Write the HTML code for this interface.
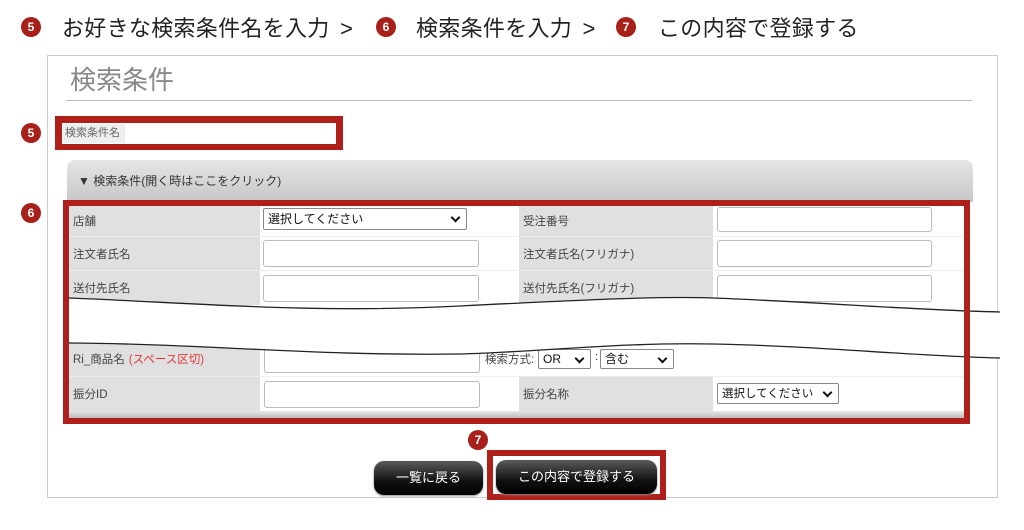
<!DOCTYPE html>
<html><head><meta charset="utf-8"><style>
*{margin:0;padding:0;box-sizing:border-box}
body{width:1024px;height:530px;background:#fff;font-family:"Liberation Sans","Noto Sans CJK JP",sans-serif;position:relative;overflow:hidden;color:#333}
.a{position:absolute}
.badge{position:absolute;width:20px;height:20px;border-radius:50%;background:#a8201a;color:#fff;font-size:12px;font-weight:bold;text-align:center;line-height:20px}
.hd{position:absolute;top:11px;font-size:22px;color:#222;white-space:nowrap;letter-spacing:0.3px}
.lab{position:absolute;background:#e0e0e0;font-size:11.5px;color:#444;padding-left:4px;display:flex;align-items:center}
.inp{position:absolute;background:#fff;border:1px solid #bbb;border-radius:3px}
.sel{position:absolute;background:#fff;border:1px solid #888;border-radius:2px;font-size:12px;color:#111;padding-left:4px;line-height:20px}
.sel:after{content:"";position:absolute;right:7px;top:5px;width:5px;height:5px;border-right:2px solid #111;border-bottom:2px solid #111;transform:rotate(45deg)}
.btn{position:absolute;border-radius:10px;background:linear-gradient(#5a5a5a,#111 60%,#000);color:#fff;font-size:13px;text-align:center;box-shadow:0 1px 2px #888}
</style></head><body>
<div class="badge" style="left:21px;top:17px">5</div>
<div class="hd" style="left:62px">お好きな検索条件名を入力 <span style="margin-left:4px">&gt;</span></div>
<div class="badge" style="left:376px;top:17px">6</div>
<div class="hd" style="left:416px">検索条件を入力 <span style="margin-left:4px">&gt;</span></div>
<div class="badge" style="left:616px;top:17px">7</div>
<div class="hd" style="left:658px">この内容で登録する</div>

<div class="a" style="left:47px;top:55px;width:951px;height:443px;border:1px solid #ccc"></div>
<div class="a" style="left:70px;top:60px;font-size:26px;color:#888">検索条件</div>
<div class="a" style="left:66px;top:100px;width:906px;height:1px;background:#bbb"></div>

<div class="badge" style="left:21px;top:123px">5</div>
<div class="a" style="left:55px;top:116px;width:288px;height:34px;background:#b0201a"></div>
<div class="a" style="left:62px;top:123px;width:274px;height:21px;background:#fff"></div>
<div class="a" style="left:63px;top:124px;width:62px;height:19px;background:#eee;font-size:11px;color:#666;line-height:19px;padding-left:2px">検索条件名</div>

<div class="a" style="left:67px;top:160px;width:906px;height:42px;border-radius:8px 8px 0 0;background:linear-gradient(#e6e6e6,#c6c6c6);font-size:12px;color:#333;padding:12px 0 0 11px">▼ 検索条件(開く時はここをクリック)</div>

<div class="badge" style="left:21px;top:203px">6</div>
<div class="a" style="left:63px;top:200px;width:907px;height:224px;background:#b0201a"></div>
<div class="a" style="left:69px;top:206px;width:895px;height:212px;background:#fff"></div>

<div class="lab" style="left:69px;top:206px;width:191px;height:30px">店舗</div>
<div class="sel" style="left:263px;top:208px;width:204px;height:22px">選択してください</div>
<div class="lab" style="left:519px;top:206px;width:194px;height:30px">受注番号</div>
<div class="inp" style="left:717px;top:207px;width:215px;height:25px"></div>

<div class="a" style="left:69px;top:236px;width:895px;height:1px;background:#eee"></div>
<div class="lab" style="left:69px;top:237px;width:191px;height:33px">注文者氏名</div>
<div class="inp" style="left:263px;top:240px;width:216px;height:27px"></div>
<div class="lab" style="left:519px;top:237px;width:194px;height:33px">注文者氏名(フリガナ)</div>
<div class="inp" style="left:717px;top:240px;width:215px;height:27px"></div>

<div class="a" style="left:69px;top:270px;width:895px;height:1px;background:#eee"></div>
<div class="lab" style="left:69px;top:271px;width:191px;height:34px;align-items:flex-start;padding-top:9px">送付先氏名</div>
<div class="inp" style="left:263px;top:275px;width:216px;height:27px"></div>
<div class="lab" style="left:519px;top:271px;width:194px;height:40px;align-items:flex-start;padding-top:9px">送付先氏名(フリガナ)</div>
<div class="inp" style="left:717px;top:275px;width:215px;height:27px"></div>

<div class="lab" style="left:69px;top:340px;width:191px;height:36px;align-items:flex-end;padding-bottom:9px">Ri_商品名 <span style="color:#e03a3a;margin-left:4px">(スペース区切)</span></div>
<div class="inp" style="left:264px;top:346px;width:216px;height:27px"></div>
<div class="a" style="left:485px;top:351px;font-size:11.5px;color:#444">検索方式:</div>
<div class="sel" style="left:538px;top:349px;width:53px;height:20px;line-height:18px">OR</div>
<div class="a" style="left:595px;top:351px;font-size:11px">:</div>
<div class="sel" style="left:600px;top:349px;width:74px;height:20px;line-height:18px">含む</div>

<div class="a" style="left:69px;top:376px;width:895px;height:1px;background:#eee"></div>
<div class="lab" style="left:69px;top:377px;width:191px;height:34px">振分ID</div>
<div class="inp" style="left:264px;top:381px;width:216px;height:27px"></div>
<div class="lab" style="left:519px;top:377px;width:194px;height:34px">振分名称</div>
<div class="sel" style="left:717px;top:383px;width:122px;height:21px;font-size:11.5px">選択してください</div>
<div class="a" style="left:69px;top:411px;width:895px;height:7px;background:linear-gradient(#e8e8e8,#bbb)"></div>

<svg class="a" style="left:60px;top:290px" width="940" height="80" viewBox="0 0 940 80">
<path d="M9 8 C120 12 250 24 400 16 C520 10 600 6 653 8 C760 12 850 20 940 22 L940 68 C850 66 760 56 653 54 C560 52 480 62 400 64 C250 66 150 54 9 53 Z" fill="#fff"/>
<path d="M9 8 C120 12 250 24 400 16 C520 10 600 6 653 8 C760 12 850 20 940 22" fill="none" stroke="#222" stroke-width="1.3"/>
<path d="M9 53 C150 54 250 66 400 64 C480 62 560 52 653 54 C760 56 850 66 940 68" fill="none" stroke="#222" stroke-width="1.3"/>
</svg>
<div class="a" style="left:964px;top:290px;width:6px;height:80px;background:#b0201a"></div>

<div class="badge" style="left:468px;top:430px">7</div>
<div class="btn" style="left:374px;top:461px;width:109px;height:34px;line-height:34px">一覧に戻る</div>
<div class="a" style="left:487px;top:450px;width:179px;height:50px;background:#b0201a"></div>
<div class="a" style="left:493px;top:456px;width:167px;height:38px;background:#fff"></div>
<div class="btn" style="left:496px;top:460px;width:161px;height:34px;line-height:34px">この内容で登録する</div>
</body></html>
